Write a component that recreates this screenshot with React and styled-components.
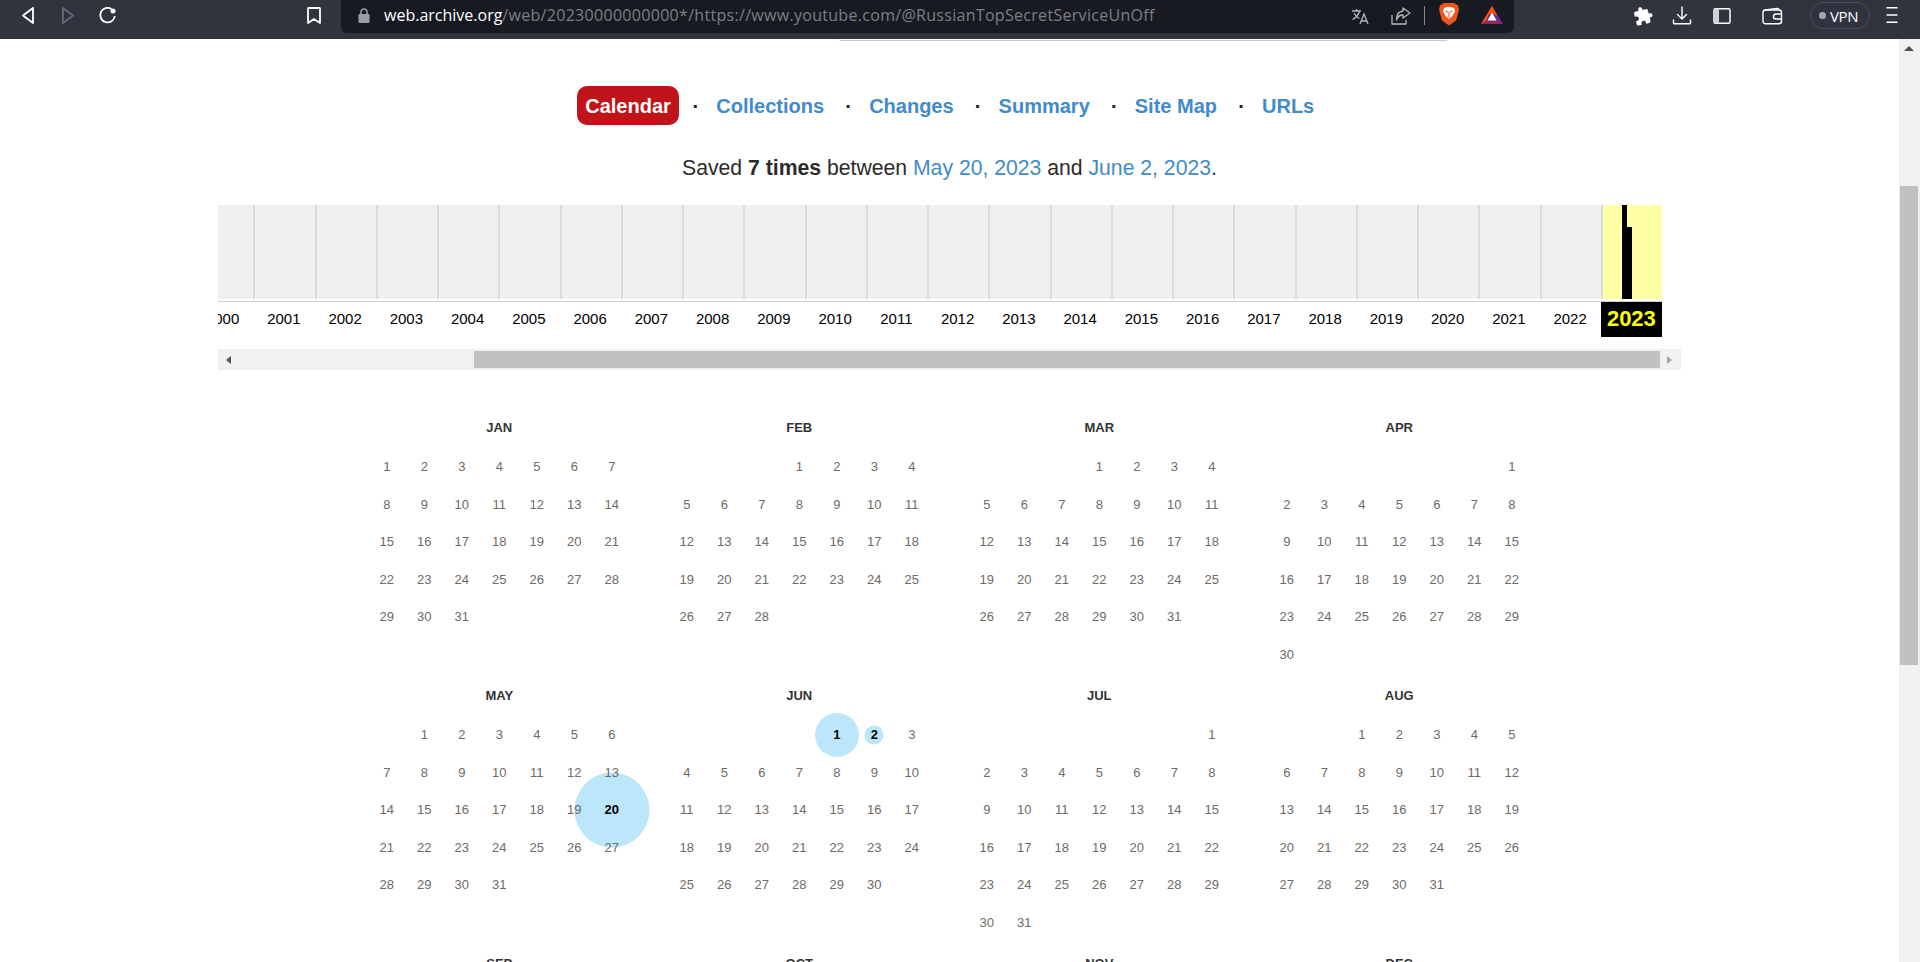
import React from "react";
import styled, { createGlobalStyle } from "styled-components";

const GlobalStyle = createGlobalStyle`
  html, body { margin: 0; padding: 0; background: #fff; overflow: hidden; }
  body { font-family: "Liberation Sans", Arial, sans-serif; }
  * { box-sizing: border-box; }
`;

const MONTHS = [
  { name: "JAN", start: 0, days: 31 },
  { name: "FEB", start: 3, days: 28 },
  { name: "MAR", start: 3, days: 31 },
  { name: "APR", start: 6, days: 30 },
  { name: "MAY", start: 1, days: 31, marks: { 20: 75 } },
  { name: "JUN", start: 4, days: 30, marks: { 1: 44, 2: 19 } },
  { name: "JUL", start: 6, days: 31 },
  { name: "AUG", start: 2, days: 31 },
  { name: "SEP", start: 5, days: 30 },
  { name: "OCT", start: 0, days: 31 },
  { name: "NOV", start: 3, days: 30 },
  { name: "DEC", start: 5, days: 31 },
];

const YEARS = Array.from({ length: 24 }, (_, i) => 2000 + i);
const TABS = ["Collections", "Changes", "Summary", "Site Map", "URLs"];

const Page = styled.div`
  display: flex;
  flex-direction: column;
  width: 1920px;
  height: 962px;
  overflow: hidden;
`;

/* browser chrome */
const Toolbar = styled.header`
  display: flex;
  flex: 0 0 39px;
  background: #31343f;
`;

const NavButtons = styled.div`
  display: flex;
  flex: 0 0 341px;
  padding: 3px 0 0 20px;
`;

const Icon = styled.svg`
  display: block;
  flex: none;
  margin-left: ${(p) => p.$ml || 0}px;
`;

const AddressBar = styled.div`
  display: flex;
  flex: 0 0 1173px;
  height: 33px;
  padding: 3px 10px 0 17px;
  background: #181a21;
  border-radius: 0 0 6px 6px;
`;

const Url = styled.div`
  margin-left: 14px;
  font-family: "Open Sans", sans-serif;
  font-size: 16px;
  line-height: 25px;
  letter-spacing: 0.3px;
  color: #7d7f87;
  white-space: nowrap;
  b {
    font-weight: 400;
    letter-spacing: 0;
    color: #fff;
  }
`;

const AddressActions = styled.div`
  display: flex;
  margin-left: auto;
`;

const Divider = styled.span`
  flex: none;
  width: 1px;
  height: 19px;
  margin: 3px 0 0 13px;
  background: #83858e;
`;

const BrowserActions = styled.div`
  display: flex;
  flex: 1;
  padding: 3px 0 0 119px;
`;

const VpnPill = styled.div`
  display: flex;
  align-items: center;
  flex: none;
  width: 60px;
  height: 27px;
  margin: -1px 0 0 27px;
  padding-left: 8px;
  border: 1.5px solid #4b4e5c;
  border-radius: 14px;
  font-family: "Open Sans", sans-serif;
  font-size: 15px;
  letter-spacing: -0.4px;
  color: #fff;
  &::before {
    content: "";
    width: 7px;
    height: 7px;
    margin-right: 4px;
    border-radius: 50%;
    background: #a3a6b8;
  }
`;

/* page */
const Body = styled.div`
  display: flex;
  flex: 1;
  min-height: 0;
`;

const Main = styled.main`
  flex: 1;
  min-width: 0;
`;

const Leftover = styled.div`
  width: 609px;
  height: 2px;
  margin-left: 839px;
  border-bottom: 1.5px solid #c8c8c8;
  border-radius: 0 0 3px 3px;
`;

const Tabs = styled.nav`
  display: flex;
  justify-content: center;
  align-items: center;
  height: 39px;
  margin-top: 45px;
  padding-right: 8px;
  font-size: 20px;
  font-weight: 700;
`;

const ActiveTab = styled.a`
  height: 39px;
  padding: 1px 8.5px 0;
  line-height: 38px;
  margin-right: -8px;
  border-radius: 10px;
  background: #c1131a;
  color: #fff;
`;

const Tab = styled.a`
  padding-top: 2px;
  color: #428bca;
`;

const Dot = styled.span`
  flex: 0 0 45px;
  padding: 2px 0 0 4px;
  text-align: center;
  color: #222;
`;

const Summary = styled.p`
  margin: 28px 0 0;
  font-size: 21.2px;
  line-height: 30px;
  text-align: center;
  color: #2b2b2b;
  a {
    color: #428bca;
  }
`;

const Sparkline = styled.section`
  width: 1463px;
  margin: 22px 0 0 218px;
`;

const Row = styled.div`
  display: flex;
  justify-content: flex-end;
  width: 1444px;
  overflow: hidden;
`;

const BarRow = styled(Row)`
  height: 94px;
`;

const YearBars = styled.div`
  flex: 0 0 61.25px;
  height: 94px;
  border-left: 2px solid #dadada;
  background: ${(p) => (p.$active ? "#ffffa5" : "#efefef")};
`;

const LabelRow = styled(Row)`
  height: 36px;
  margin-top: 2px;
  border-top: 1px solid #ccc;
`;

const YearLabel = styled.div`
  flex: 0 0 61.25px;
  font-size: ${(p) => (p.$active ? 22 : 15)}px;
  font-weight: ${(p) => (p.$active ? 700 : 400)};
  line-height: 33px;
  text-align: center;
  color: ${(p) => (p.$active ? "#ff0" : "#000")};
  background: ${(p) => (p.$active ? "#000" : "transparent")};
`;

const HScroll = styled.div`
  display: flex;
  align-items: center;
  height: 21px;
  margin-top: 12px;
  background: #f1f1f1;
`;

const ArrowH = styled.span`
  flex: none;
  width: 0;
  height: 0;
  border-top: 4px solid transparent;
  border-bottom: 4px solid transparent;
  ${(p) =>
    p.$right
      ? "margin-left: 7px; border-left: 5px solid #a3a3a3;"
      : "margin: 0 243px 0 8px; border-right: 5px solid #505050;"}
`;

const HThumb = styled.span`
  flex: none;
  width: 1186px;
  height: 17px;
  background: #c1c1c1;
`;

const Calendar = styled.section`
  display: grid;
  grid-template-columns: repeat(4, 262.5px);
  column-gap: 37.5px;
  row-gap: 3px;
  margin: 38px 0 0 368px;
`;

const MonthTitle = styled.h3`
  margin: 0;
  font-size: 13px;
  font-weight: 700;
  line-height: 40px;
  text-align: center;
  color: #333;
`;

const Days = styled.div`
  display: grid;
  grid-template-columns: repeat(7, 37.5px);
  grid-auto-rows: 37.5px;
`;

const Day = styled.div`
  position: relative;
  display: flex;
  align-items: center;
  justify-content: center;
  font-size: 13px;
  font-weight: ${(p) => (p.$marked ? 700 : 400)};
  color: ${(p) => (p.$marked ? "#000" : "#6f6a66")};
  grid-column-start: ${(p) => p.$col || "auto"};
`;

const DayNumber = styled.span`
  position: relative;
  z-index: 2;
`;

const Capture = styled.span`
  position: absolute;
  top: 50%;
  left: 50%;
  width: ${(p) => p.$size}px;
  height: ${(p) => p.$size}px;
  border-radius: 50%;
  background: #bce6f9;
  transform: translate(-50%, -50%);
`;

const VScroll = styled.aside`
  flex: 0 0 21px;
  padding-left: 1px;
  background: #f1f1f1;
`;

const ArrowUp = styled.div`
  width: 0;
  height: 0;
  margin: 7px 0 0 4px;
  border-left: 5px solid transparent;
  border-right: 5px solid transparent;
  border-bottom: 5px solid #505050;
`;

const VThumb = styled.div`
  width: 18px;
  height: 479px;
  margin-top: 135px;
  background: #c1c1c1;
`;

function Month({ month }) {
  const days = Array.from({ length: month.days }, (_, i) => i + 1);
  return (
    <div>
      <MonthTitle>{month.name}</MonthTitle>
      <Days>
        {days.map((d) => {
          const size = month.marks && month.marks[d];
          return (
            <Day key={d} $marked={!!size} $col={d === 1 ? month.start + 1 : null}>
              {size && <Capture $size={size} />}
              <DayNumber>{d}</DayNumber>
            </Day>
          );
        })}
      </Days>
    </div>
  );
}

export default function App() {
  return (
    <Page>
      <GlobalStyle />
      <Toolbar>
        <NavButtons>
          <Icon width="16" height="24" viewBox="0 0 16 24">
            <path d="M13 5 L3 12.5 L13 20 Z" fill="none" stroke="#fff" strokeWidth="1.8" strokeLinejoin="round" />
          </Icon>
          <Icon $ml={24} width="16" height="24" viewBox="0 0 16 24">
            <path d="M3 5 L13 12.5 L3 20 Z" fill="none" stroke="#666977" strokeWidth="1.8" strokeLinejoin="round" />
          </Icon>
          <Icon $ml={19} width="24" height="24" viewBox="0 0 24 24">
            <path d="M16.5 6 A7.3 7.3 0 1 0 19.8 13" fill="none" stroke="#fff" strokeWidth="1.8" />
            <circle cx="18" cy="8" r="2.5" fill="#fff" />
          </Icon>
          <Icon $ml={185} width="20" height="24" viewBox="0 0 20 24">
            <path d="M4 5.5 Q4 5 5 5 H15 Q16 5 16 5.5 V20 L10 16 L4 20 Z" fill="none" stroke="#fff" strokeWidth="1.8" strokeLinejoin="round" />
          </Icon>
        </NavButtons>
        <AddressBar>
          <Icon width="12" height="24" viewBox="0 0 12 24">
            <path d="M3 11 V9 a3 3 0 0 1 6 0 V11" fill="none" stroke="#9a9ca6" strokeWidth="1.6" />
            <rect x="0.5" y="11" width="11" height="9" rx="1.2" fill="#9a9ca6" />
          </Icon>
          <Url>
            <b>web.archive.org</b>/web/20230000000000*/https://www.youtube.com/@RussianTopSecretServiceUnOff
          </Url>
          <AddressActions>
            <Icon width="18" height="24" viewBox="0 0 18 24">
              <g fill="none" stroke="#b4b6bc" strokeWidth="1.3">
                <path d="M1 8 H10 M5.5 6 V8 M8.5 8 C7.5 12 4.5 15 1.5 16.5 M3 10 C4.5 13 6.5 14.5 8.5 15.5" />
                <path d="M9 21 L13 11 L17 21 M10.3 18 H15.7" />
              </g>
            </Icon>
            <Icon $ml={22} width="20" height="24" viewBox="0 0 20 24">
              <g fill="none" stroke="#b4b6bc" strokeWidth="1.3" strokeLinejoin="round">
                <path d="M1 12 V21 H15 V17" />
                <path d="M12 5 L19 10 L12 15 V12 C8.5 12 6.5 14 5.5 17 C5.5 12 8 8.5 12 8 Z" />
              </g>
            </Icon>
            <Divider />
            <Icon $ml={13} width="22" height="24" viewBox="0 0 22 24">
              <path d="M5 2 L8 1 H14 L17 2 L20 4 L21 8 L20 12 L18 19 L11 24 L4 19 L2 12 L1 8 L2 4 Z" fill="#f1561f" transform="translate(0,-1.5)" />
              <path d="M6 6 L9 5 H13 L16 6 L17 9 L15 13 L13.5 15 L11 17 L8.500 15 L7 13 L5 9 Z" fill="#fff" transform="translate(0,-1)" />
              <path d="M7.5 9 L10 10 M14.5 9 L12 10 M11 10 V14 M9.500 15 H12.500" stroke="#f1561f" strokeWidth="1.1" fill="none" transform="translate(0,-1)" />
            </Icon>
            <Icon $ml={20} width="24" height="24" viewBox="0 0 24 24">
              <path d="M12 3 L1 21 L23 21 Z" fill="#662d91" />
              <path d="M12 3 L1 21 L6 18 Z" fill="#ff5000" />
              <path d="M12 3 L6.5 13 L12 10 L17.500 13 Z" fill="#ff5000" />
              <path d="M12 9.500 L7.500 17.500 H16.500 Z" fill="#fff" />
              <path d="M1 21 L6 18 H18 L23 21 Z" fill="#9e1f63" />
            </Icon>
          </AddressActions>
        </AddressBar>
        <BrowserActions>
          <Icon width="20" height="24" viewBox="0 0 24 24">
            <path
              transform="rotate(-14 12 12) translate(0 1)"
              d="M20.5 11H19V7c0-1.100-.9-2-2-2h-4V3.500C13 2.120 11.880 1 10.500 1S8 2.120 8 3.500V5H4c-1.100 0-1.990.9-1.990 2v3.800H3.500c1.490 0 2.700 1.210 2.700 2.700s-1.210 2.700-2.700 2.700H2V20c0 1.100.9 2 2 2h3.800v-1.500c0-1.490 1.210-2.700 2.700-2.700 1.490 0 2.700 1.210 2.700 2.700V22H17c1.100 0 2-.9 2-2v-4h1.500c1.380 0 2.500-1.120 2.500-2.500S21.880 11 20.500 11z"
              fill="#fff"
            />
          </Icon>
          <Icon $ml={19} width="20" height="24" viewBox="0 0 20 24">
            <g fill="none" stroke="#fff" strokeWidth="1.4" strokeLinecap="round" strokeLinejoin="round">
              <path d="M10 4 V16 M5.500 11.500 L10 16 L14.500 11.500" />
              <path d="M1.500 17 V20 Q1.500 20.800 2.500 20.800 H17.500 Q18.500 20.800 18.500 20 V17" />
            </g>
          </Icon>
          <Icon $ml={21} width="18" height="24" viewBox="0 0 18 24">
            <rect x="1" y="5.700" width="16" height="14.600" rx="1.500" fill="none" stroke="#fff" strokeWidth="1.500" />
            <rect x="1" y="5.700" width="5" height="14.600" fill="#cfd0d6" />
          </Icon>
          <Icon $ml={31} width="21" height="24" viewBox="0 0 21 24">
            <g fill="none" stroke="#fff" strokeWidth="1.400" strokeLinejoin="round">
              <path d="M3 7 L15 5.500 Q17 5.500 17 7.500" />
              <rect x="1" y="7" width="18.500" height="13.700" rx="2.500" />
              <path d="M19.500 11 H14 a2.500 2.500 0 0 0 0 5 H19.500" />
            </g>
          </Icon>
          <VpnPill>VPN</VpnPill>
          <Icon $ml={16} width="12" height="24" viewBox="0 0 12 24">
            <path d="M0.500 4.800 H11.500 M0.500 12 H11.500 M0.500 19.200 H11.500" stroke="#fff" strokeWidth="1.600" />
          </Icon>
        </BrowserActions>
      </Toolbar>
      <Body>
        <Main>
          <Leftover />
          <Tabs>
            <ActiveTab>Calendar</ActiveTab>
            {TABS.map((t) => (
              <React.Fragment key={t}>
                <Dot>·</Dot>
                <Tab>{t}</Tab>
              </React.Fragment>
            ))}
          </Tabs>
          <Summary>
            Saved <strong>7 times</strong> between <a>May 20, 2023</a> and <a>June 2, 2023</a>.
          </Summary>
          <Sparkline>
            <BarRow>
              {YEARS.map((y) => (
                <YearBars key={y} $active={y === 2023}>
                  {y === 2023 && (
                    <svg width="30" height="94" viewBox="0 0 30 94" style={{ display: "block" }}>
                      <rect x="19" y="0" width="5" height="94" fill="#000" />
                      <rect x="24" y="22" width="5" height="72" fill="#000" />
                    </svg>
                  )}
                </YearBars>
              ))}
            </BarRow>
            <LabelRow>
              {YEARS.map((y) => (
                <YearLabel key={y} $active={y === 2023}>
                  {y}
                </YearLabel>
              ))}
            </LabelRow>
            <HScroll>
              <ArrowH />
              <HThumb />
              <ArrowH $right />
            </HScroll>
          </Sparkline>
          <Calendar>
            {MONTHS.map((m) => (
              <Month key={m.name} month={m} />
            ))}
          </Calendar>
        </Main>
        <VScroll>
          <ArrowUp />
          <VThumb />
        </VScroll>
      </Body>
    </Page>
  );
}
